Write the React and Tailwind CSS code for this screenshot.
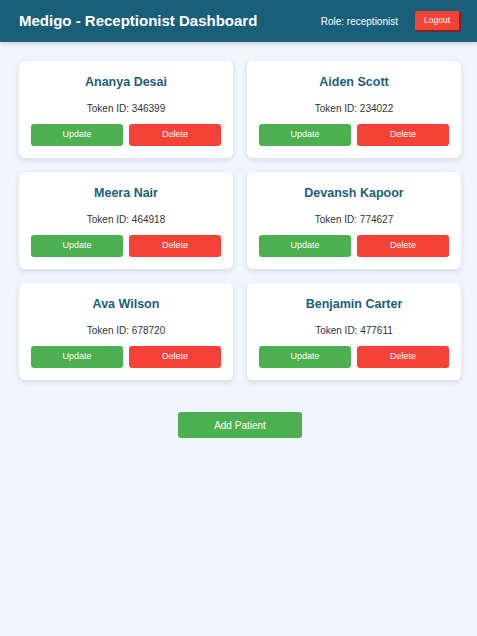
const patients = [
  { id: 1, name: 'Ananya Desai', token: '346399' },
  { id: 2, name: 'Aiden Scott', token: '234022' },
  { id: 3, name: 'Meera Nair', token: '464918' },
  { id: 4, name: 'Devansh Kapoor', token: '774627' },
  { id: 5, name: 'Ava Wilson', token: '678720' },
  { id: 6, name: 'Benjamin Carter', token: '477611' },
]

function PatientCard({ patient }) {
  return (
    <div className="bg-white rounded-md shadow-[0_2px_6px_rgba(0,0,0,0.12)] px-3 pt-[13px] pb-3 text-center">
      <h3 className="text-[12.5px] leading-4 font-bold text-[#1a5f7a]">{patient.name}</h3>
      <p className="mt-[12px] text-[10px] leading-[14px] text-[#333]">Token ID: {patient.token}</p>
      <div className="mt-[8px] grid grid-cols-2 gap-[6px]">
        <button className="h-[22px] rounded-[3px] bg-[#4caf50] text-white text-[9px]">Update</button>
        <button className="h-[22px] rounded-[3px] bg-[#f44336] text-white text-[9px]">Delete</button>
      </div>
    </div>
  )
}

export default function App() {
  return (
    <div className="min-h-screen bg-[#eff6fd] font-['Liberation_Sans',Arial,sans-serif]">
      <header className="h-[42px] bg-[#1a5f7a] flex items-center justify-between pl-[19px] pr-4 shadow-[0_2px_4px_rgba(0,0,0,0.15)]">
        <h1 className="text-[15px] font-bold text-white">Medigo - Receptionist Dashboard</h1>
        <div className="flex items-center gap-[17px]">
          <span className="text-[10px] text-white">Role: receptionist</span>
          <button className="h-[21px] w-[46px] rounded-[2px] bg-[#f44336] text-white text-[8.5px] border-b-2 border-r-2 border-[#7a2a24]">
            Logout
          </button>
        </div>
      </header>

      <main className="pl-[19px] pr-4 pt-[19px]">
        <div className="grid grid-cols-2 gap-x-[14px] gap-y-[14px]">
          {patients.map((p) => (
            <PatientCard key={p.id} patient={p} />
          ))}
        </div>
        <div className="mt-8 flex justify-center">
          <button className="h-[26px] w-[124px] rounded-[3px] bg-[#4caf50] text-white text-[10px]">Add Patient</button>
        </div>
      </main>
    </div>
  )
}
